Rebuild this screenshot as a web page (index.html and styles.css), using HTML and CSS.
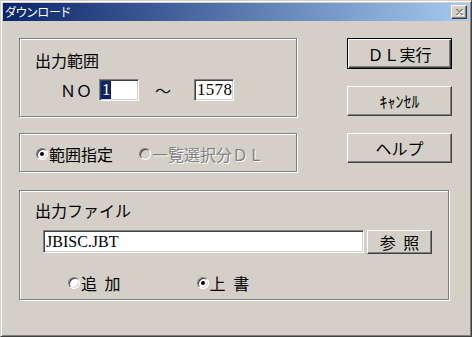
FILE: index.html
```html
<!DOCTYPE html>
<html lang="ja">
<head>
<meta charset="utf-8">
<title>ダウンロード</title>
<link rel="stylesheet" href="styles.css">
</head>
<body>
<div class="window">
  <div class="titlebar">
    <span class="title">ダウンロード</span>
    <span class="close">
      <svg width="8" height="7" viewBox="0 0 9 8" class="xicon">
        <defs>
          <g id="xg">
            <rect x="0" y="0" width="2" height="1"/><rect x="6" y="0" width="2" height="1"/>
            <rect x="1" y="1" width="2" height="1"/><rect x="5" y="1" width="2" height="1"/>
            <rect x="2" y="2" width="4" height="1"/>
            <rect x="3" y="3" width="2" height="1"/>
            <rect x="2" y="4" width="4" height="1"/>
            <rect x="1" y="5" width="2" height="1"/><rect x="5" y="5" width="2" height="1"/>
            <rect x="0" y="6" width="2" height="1"/><rect x="6" y="6" width="2" height="1"/>
          </g>
        </defs>
        <use href="#xg" x="1" y="1" fill="#ffffff"/>
        <use href="#xg" fill="#808080"/>
      </svg>
    </span>
  </div>
  <div class="content">
    <div class="row row1">
      <div class="group g1">
        <div class="label">出力範囲</div>
        <div class="range">
          <span class="no">ＮＯ</span>
          <span class="field num from"><span class="sel">1</span></span>
          <span class="tilde">～</span>
          <span class="field num to">1578</span>
        </div>
      </div>
      <div class="side">
        <div class="btn default">ＤＬ実行</div>
        <div class="btn">ｷｬﾝｾﾙ</div>
      </div>
    </div>
    <div class="row row2">
      <div class="group g2">
        <span class="radio checked"></span><span class="rlabel">範囲指定</span>
        <span class="radio disabled r2"></span><span class="rlabel dis">一覧選択分ＤＬ</span>
      </div>
      <div class="side">
        <div class="btn">ヘルプ</div>
      </div>
    </div>
    <div class="row row3">
      <div class="group g3">
        <div class="label">出力ファイル</div>
        <div class="filerow">
          <span class="field file">JBISC.JBT</span>
          <div class="btn browse">参 照</div>
        </div>
        <div class="moderow">
          <span class="radio"></span><span class="rlabel">追 加</span>
          <span class="radio checked r2b"></span><span class="rlabel">上 書</span>
        </div>
      </div>
    </div>
  </div>
</div>
</body>
</html>
```

FILE: styles.css
```css
* { box-sizing: border-box; }
html, body { margin: 0; padding: 0; background: #d4d0c8; }
body {
  font-family: "Noto Sans CJK JP", sans-serif;
  font-size: 16px;
  line-height: 18px;
  color: #000;
}
.window {
  width: 472px;
  height: 337px;
  border: 1px solid;
  border-color: #d4d0c8 #404040 #404040 #d4d0c8;
  box-shadow: inset 1px 1px #ffffff, inset -1px -1px #808080;
  padding: 2px;
  background: #d4d0c8;
  display: flex;
  flex-direction: column;
}
.titlebar {
  height: 18px;
  background: linear-gradient(to right, #0a246a, #a6caf0);
  display: flex;
  align-items: center;
  justify-content: space-between;
  padding: 0 2px 0 2px;
}
.title {
  color: #fff;
  font-size: 12px;
  line-height: 18px;
  font-feature-settings: "palt" 1;
}
.close {
  width: 16px;
  height: 14px;
  background: #d4d0c8;
  border: 1px solid;
  border-color: #ffffff #404040 #404040 #ffffff;
  box-shadow: inset -1px -1px #808080;
  display: flex;
  align-items: center;
  justify-content: center;
  padding: 1px 0 0 1px;
}
.xicon { display: block; shape-rendering: crispEdges; }
.content {
  padding: 17px 0 0 16px;
  display: flex;
  flex-direction: column;
}
.row { display: flex; align-items: flex-start; }
.row2 { margin-top: 16px; }
.row3 { margin-top: 18px; }
.group {
  border: 1px solid #808080;
  box-shadow: inset 1px 1px #ffffff, 1px 1px #ffffff;
}
.g1 { width: 278px; height: 79px; padding: 12px 0 0 15px; }
.g2 { width: 278px; height: 39px; display: flex; align-items: center; padding-left: 16px; padding-top: 2px; }
.g3 { width: 430px; height: 110px; padding: 10px 0 0 15px; }
.side {
  margin-left: 50px;
  display: flex;
  flex-direction: column;
  gap: 17px;
}
.btn {
  width: 105px;
  height: 30px;
  background: #d4d0c8;
  border: 1px solid;
  border-color: #ffffff #404040 #404040 #ffffff;
  box-shadow: inset -1px -1px #808080;
  display: flex;
  align-items: center;
  justify-content: center;
  white-space: pre;
}
.btn.default {
  height: 31px;
  border: 1px solid #000;
  box-shadow: inset 1px 1px #ffffff, inset -1px -1px #404040, inset -2px -2px #808080;
}
.range {
  display: flex;
  align-items: center;
  margin: 10px 0 0 25px;
  height: 22px;
}
.no { width: 32px; }
.field {
  background: #fff;
  border: 1px solid;
  border-color: #808080 #ffffff #ffffff #808080;
  box-shadow: inset 1px 1px #404040, inset -1px -1px #d4d0c8;
  display: flex;
  align-items: center;
  height: 22px;
  padding-left: 1px;
  font-family: "Liberation Serif", serif;
  font-size: 17px;
  white-space: pre;
}
.num { width: 40px; letter-spacing: 0.3px; }
.from { margin-left: 7px; }
.to { margin-left: 23px; padding-left: 2px; }
.tilde { margin-left: 16px; width: 16px; }
.sel {
  background: #0a246a;
  color: #fff;
  line-height: 18px;
  padding: 0 1px;
  width: 10px;
}
.radio {
  width: 12px;
  height: 12px;
  flex: none;
  border-radius: 50%;
  background: #fff;
  border: 1px solid;
  border-color: #808080 #ffffff #ffffff #808080;
  box-shadow: inset 1px 1px #404040, inset -1px -1px #d4d0c8;
  position: relative;
}
.radio.checked::after {
  content: "";
  position: absolute;
  left: 3px;
  top: 3px;
  width: 4px;
  height: 4px;
  border-radius: 50%;
  background: #000;
}
.radio.disabled { background: #d4d0c8; }
.rlabel { margin-left: 1px; white-space: pre; word-spacing: 4px; }
.rlabel.dis { color: #808080; text-shadow: 1px 1px #ffffff; }
.r2 { margin-left: 26px; }
.filerow {
  display: flex;
  align-items: flex-start;
  margin: 11px 0 0 8px;
}
.file {
  width: 321px;
  height: 23px;
  font-size: 16px;
  padding-left: 2px;
}
.browse { width: 65px; height: 24px; margin-left: 3px; word-spacing: 4px; }
.moderow {
  display: flex;
  align-items: center;
  height: 18px;
  margin: 20px 0 0 33px;
}
.r2b { margin-left: 76px; }
```
